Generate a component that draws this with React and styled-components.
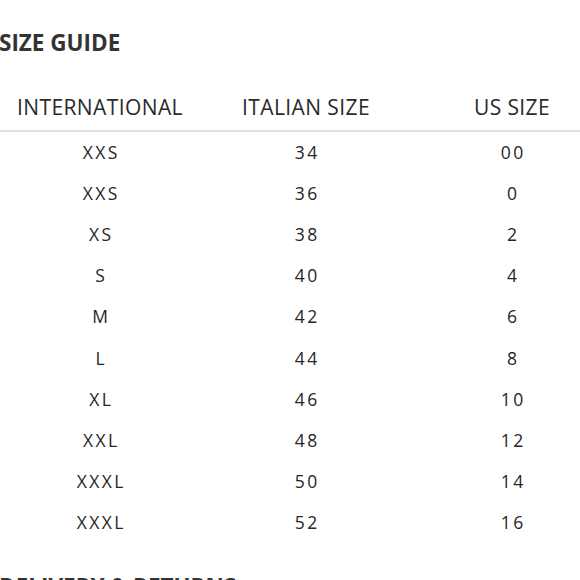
import React from "react";
import styled, { createGlobalStyle } from "styled-components";

const Global = createGlobalStyle`
  html, body { margin: 0; padding: 0; background: #fff; overflow: hidden; }
  body { font-family: "Open Sans", "DejaVu Sans", sans-serif; color: #2f2f2f; }
`;

const Page = styled.div`
  width: 580px;
  height: 580px;
  overflow: hidden;
  display: flex;
  flex-direction: column;
`;

const Title = styled.h2`
  margin: 28px 0 0 -1px;
  font-size: 22.5px;
  line-height: 30px;
  font-weight: 700;
  letter-spacing: 0;
  color: #333;
  white-space: nowrap;
`;

const Table = styled.div`
  margin: 22px 0 0 -3px;
  width: 618px;
  display: flex;
  flex-direction: column;
`;

const HeadRow = styled.div`
  display: grid;
  grid-template-columns: repeat(3, 206px);
  height: 50px;
  align-items: center;
  border-bottom: 2px solid #e2e2e2;
`;

const HeadCell = styled.div`
  text-align: center;
  font-size: 21px;
  font-weight: 500;
  letter-spacing: 0.4px;
  color: #2a2a2a;
  padding-top: 3px;
`;

const Row = styled.div`
  display: grid;
  grid-template-columns: repeat(3, 206px);
  height: 41.2px;
  align-items: center;
`;

const Cell = styled.div`
  text-align: center;
  font-size: 17.5px;
  font-weight: 500;
  letter-spacing: 2.4px;
  text-indent: 2.4px;
  color: #262626;
  padding-bottom: 2px;
`;

const NextTitle = styled(Title)`
  margin-top: 28px;
`;

const rows = [
  ["XXS", "34", "00"],
  ["XXS", "36", "0"],
  ["XS", "38", "2"],
  ["S", "40", "4"],
  ["M", "42", "6"],
  ["L", "44", "8"],
  ["XL", "46", "10"],
  ["XXL", "48", "12"],
  ["XXXL", "50", "14"],
  ["XXXL", "52", "16"],
];

export default function App() {
  return (
    <Page>
      <Global />
      <Title>SIZE GUIDE</Title>
      <Table>
        <HeadRow>
          <HeadCell>INTERNATIONAL</HeadCell>
          <HeadCell>ITALIAN SIZE</HeadCell>
          <HeadCell>US SIZE</HeadCell>
        </HeadRow>
        {rows.map((r, i) => (
          <Row key={i}>
            {r.map((c, j) => (
              <Cell key={j}>{c}</Cell>
            ))}
          </Row>
        ))}
      </Table>
      <NextTitle>DELIVERY &amp; RETURNS</NextTitle>
    </Page>
  );
}
